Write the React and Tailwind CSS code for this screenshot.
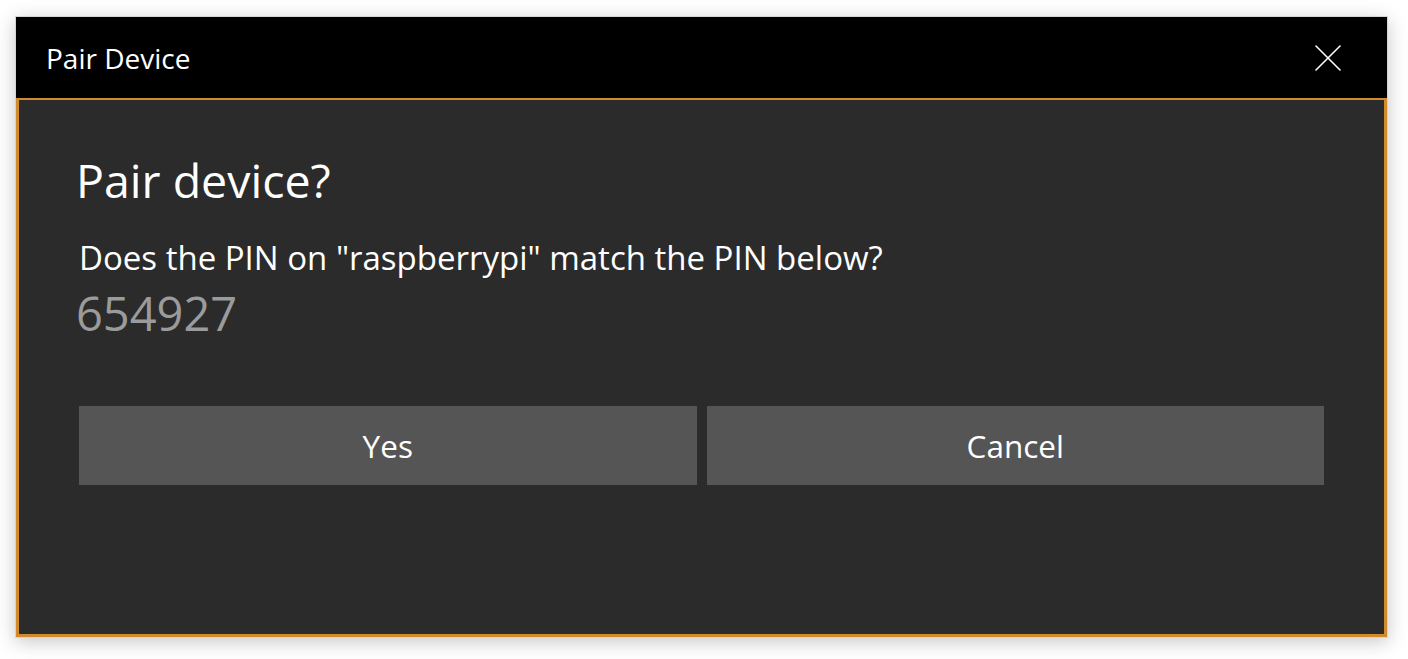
import { X } from "lucide-react";

export default function App() {
  return (
    <div className="min-h-[659px] w-[1408px] bg-white pl-[15px] pt-[16px]" style={{ fontFamily: '"Open Sans", "Noto Sans", sans-serif' }}>
      <div className="flex h-[622px] w-[1373px] flex-col border border-[#d4d4d4] shadow-[0_4px_18px_rgba(0,0,0,0.22)]">
        {/* title bar */}
        <div className="flex h-[81px] shrink-0 items-center justify-between bg-black pl-[30px] pr-[35px]">
          <span className="text-[28px] leading-none text-white">Pair Device</span>
          <X className="h-[48px] w-[48px] text-white" strokeWidth={0.8} />
        </div>

        {/* body */}
        <div className="flex flex-1 flex-col border-[3px] border-t-2 border-[#d18b2c] bg-[#2b2b2b] px-[60px] pt-[56px]">
          <h1 className="-ml-[3px] text-[46.5px] font-normal leading-[48px] text-white">Pair device?</h1>
          <p className="mt-[37px] text-[33px] leading-[33px] text-white">
            Does the PIN on "raspberrypi" match the PIN below?
          </p>
          <div className="-ml-[3px] mt-[15px] text-[47px] leading-[48px] text-[#9b9b9b]">654927</div>
          <div className="mt-[69px] flex gap-[10px]">
            <button className="h-[79px] flex-1 bg-[#555555] text-[31.5px] text-white">Yes</button>
            <button className="h-[79px] flex-1 bg-[#555555] text-[31.5px] text-white">Cancel</button>
          </div>
        </div>
      </div>
    </div>
  );
}
